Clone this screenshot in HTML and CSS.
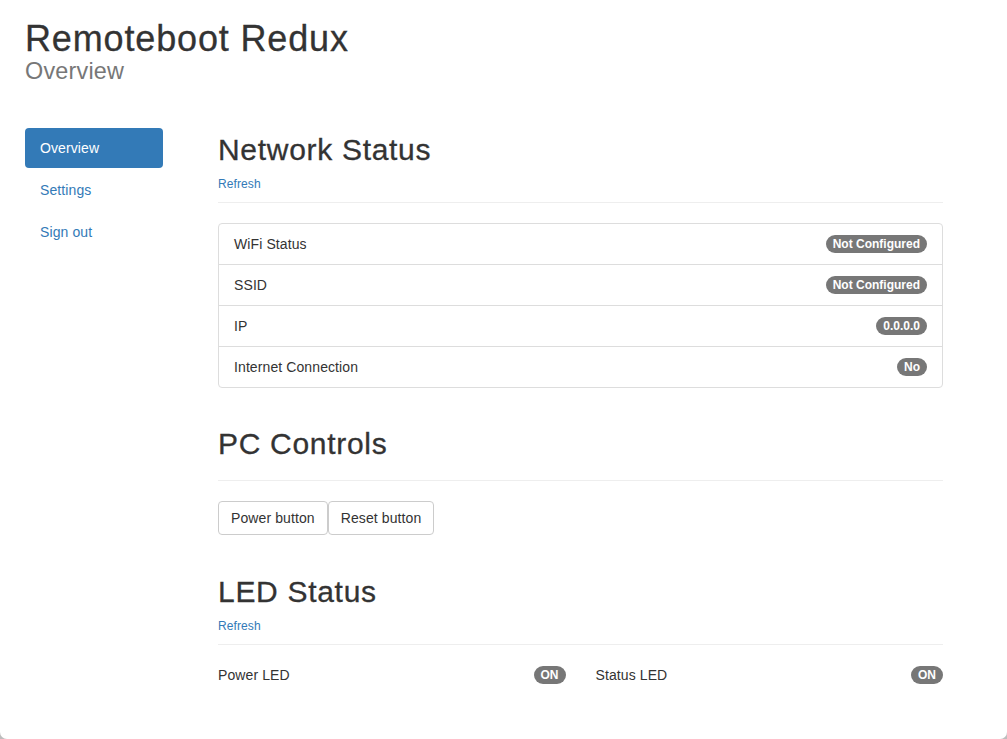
FILE: index.html
```html
<!DOCTYPE html>
<html lang="en">
<head>
<meta charset="utf-8">
<title>Remoteboot Redux</title>
<link rel="stylesheet" href="styles.css">
</head>
<body>
<div class="page">
  <header class="masthead">
    <h1 class="title">Remoteboot Redux</h1>
    <div class="subtitle">Overview</div>
  </header>
  <div class="layout">
    <nav class="sidebar">
      <a class="pill active" href="#">Overview</a>
      <a class="pill" href="#">Settings</a>
      <a class="pill" href="#">Sign out</a>
    </nav>
    <main class="content">
      <section class="section">
        <div class="section-header">
          <h2 class="section-title">Network Status</h2>
          <a class="refresh" href="#">Refresh</a>
        </div>
        <ul class="list-group">
          <li class="list-item"><span>WiFi Status</span><span class="badge">Not Configured</span></li>
          <li class="list-item"><span>SSID</span><span class="badge">Not Configured</span></li>
          <li class="list-item"><span>IP</span><span class="badge">0.0.0.0</span></li>
          <li class="list-item"><span>Internet Connection</span><span class="badge">No</span></li>
        </ul>
      </section>
      <section class="section section-after-list">
        <div class="section-header">
          <h2 class="section-title">PC Controls</h2>
        </div>
        <div class="buttons">
          <button class="btn" type="button">Power button</button>
          <button class="btn" type="button">Reset button</button>
        </div>
      </section>
      <section class="section">
        <div class="section-header">
          <h2 class="section-title">LED Status</h2>
          <a class="refresh" href="#">Refresh</a>
        </div>
        <div class="led-grid">
          <div class="led"><span>Power LED</span><span class="badge">ON</span></div>
          <div class="led"><span>Status LED</span><span class="badge">ON</span></div>
        </div>
      </section>
    </main>
  </div>
</div>
</body>
</html>
```

FILE: styles.css
```css
html {
  background: #bdbdbd;
}
body {
  margin: 0;
  background: #fff;
  min-height: 100vh;
  border-radius: 0 0 7px 7px;
  font-family: "Liberation Sans", Arial, sans-serif;
  font-size: 14px;
  line-height: 20px;
  letter-spacing: 0.1px;
  color: #333;
}
.page {
  padding: 19px 25px 0 25px;
}
.masthead {
  margin-bottom: 45px;
}
.title {
  margin: 0;
  font-size: 36px;
  line-height: 40px;
  font-weight: 500;
  letter-spacing: 0.85px;
  color: #333;
  -webkit-text-stroke: 0.3px #333;
}
.subtitle {
  font-size: 23.4px;
  line-height: 24px;
  letter-spacing: 0.2px;
  color: #777;
}
.layout {
  display: flex;
  gap: 55px;
  align-items: flex-start;
}
.sidebar {
  width: 138px;
  flex: none;
  display: flex;
  flex-direction: column;
  gap: 2px;
}
.pill {
  display: block;
  padding: 10px 15px;
  line-height: 20px;
  border-radius: 4px;
  color: #337ab7;
  text-decoration: none;
}
.pill.active {
  background: #337ab7;
  color: #fff;
}
.content {
  width: 725px;
  flex: none;
  padding-top: 5px;
}
.section + .section {
  margin-top: 40px;
}
.section.section-after-list {
  margin-top: 39px;
}
.section-header {
  padding-bottom: 10px;
  border-bottom: 1px solid #eee;
  margin-bottom: 20px;
}
.section-title {
  margin: 0 0 10px 0;
  font-size: 30px;
  line-height: 33px;
  font-weight: 500;
  letter-spacing: 0.7px;
  color: #333;
  -webkit-text-stroke: 0.3px #333;
}
.refresh {
  display: block;
  font-size: 12px;
  line-height: 16px;
  color: #337ab7;
  text-decoration: none;
}
.list-group {
  list-style: none;
  margin: 0;
  padding: 0;
}
.list-item {
  display: flex;
  justify-content: space-between;
  align-items: center;
  padding: 10px 15px;
  border: 1px solid #ddd;
  margin-bottom: -1px;
  line-height: 20px;
}
.list-item:first-child {
  border-radius: 4px 4px 0 0;
}
.list-item:last-child {
  border-radius: 0 0 4px 4px;
  margin-bottom: 0;
}
.badge {
  display: inline-block;
  padding: 3px 7px;
  font-size: 12px;
  font-weight: bold;
  line-height: 12px;
  letter-spacing: 0;
  color: #fff;
  background: #777;
  border-radius: 10px;
  white-space: nowrap;
}
.buttons {
  display: flex;
  gap: 0;
}
.btn {
  font-family: inherit;
  font-size: 14px;
  line-height: 20px;
  letter-spacing: 0.1px;
  padding: 6px 12px;
  color: #333;
  background: #fff;
  border: 1px solid #ccc;
  border-radius: 4px;
  margin: 0;
}
.led-grid {
  display: grid;
  grid-template-columns: 1fr 1fr;
  gap: 30px;
}
.led {
  display: flex;
  justify-content: space-between;
  align-items: center;
  line-height: 20px;
}
```
